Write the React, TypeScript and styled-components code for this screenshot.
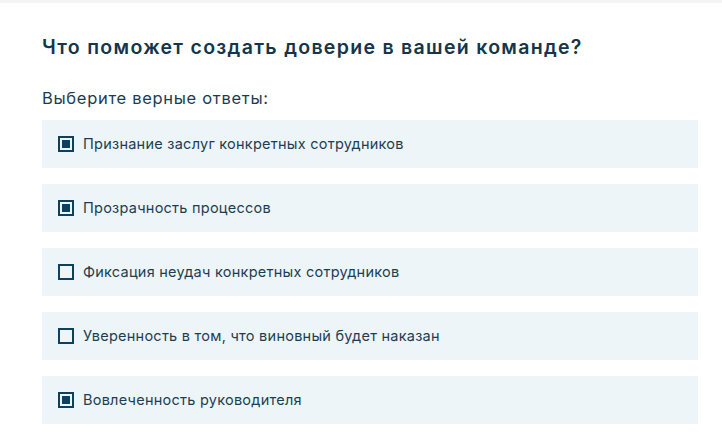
import React, { useState } from "react";
import styled, { createGlobalStyle } from "styled-components";

const GlobalStyle = createGlobalStyle`
  html, body {
    margin: 0;
    padding: 0;
    background: #ffffff;
  }
  body {
    font-family: Inter, "Open Sans", sans-serif;
    color: #1b3b4f;
  }
`;

const TopBar = styled.div`
  height: 3px;
  background: #f4f4f5;
`;

const Quiz = styled.section`
  padding: 29px 24px 0 42px;
  width: 656px;
`;

const Title = styled.h2`
  margin: 0;
  font-size: 19.5px;
  line-height: 30px;
  font-weight: 600;
  letter-spacing: 1.3px;
  color: #14354a;
`;

const Hint = styled.p`
  margin: 25px 0 0;
  font-size: 16.5px;
  line-height: 22px;
  font-weight: 400;
  letter-spacing: 0.7px;
  color: #1b3b4f;
`;

const Options = styled.div`
  display: flex;
  flex-direction: column;
  gap: 16px;
  margin-top: 11px;
`;

const Option = styled.label`
  display: flex;
  align-items: center;
  gap: 9px;
  height: 48px;
  padding: 0 16px;
  background: #edf5f9;
  cursor: pointer;
`;

const Box = styled.span<{ $checked: boolean }>`
  flex: none;
  width: 16px;
  height: 16px;
  box-sizing: border-box;
  border: 2px solid #0d4160;
  padding: 2px;
  display: flex;

  &::after {
    content: "";
    flex: 1;
    background: ${(p) => (p.$checked ? "#0d4160" : "transparent")};
  }
`;

const OptionText = styled.span`
  font-size: 14.5px;
  line-height: 20px;
  letter-spacing: 0.25px;
  color: #1d3e52;
`;

const answers = [
  { text: "Признание заслуг конкретных сотрудников", checked: true },
  { text: "Прозрачность процессов", checked: true },
  { text: "Фиксация неудач конкретных сотрудников", checked: false },
  { text: "Уверенность в том, что виновный будет наказан", checked: false },
  { text: "Вовлеченность руководителя", checked: true },
];

export default function App() {
  const [picked, setPicked] = useState(answers.map((a) => a.checked));

  const toggle = (i: number) => {
    setPicked((prev) => prev.map((v, j) => (j === i ? !v : v)));
  };

  return (
    <>
      <GlobalStyle />
      <TopBar />
      <Quiz>
        <Title>Что поможет создать доверие в вашей команде?</Title>
        <Hint>Выберите верные ответы:</Hint>
        <Options>
          {answers.map((a, i) => (
            <Option key={a.text} onClick={() => toggle(i)}>
              <Box $checked={picked[i]} />
              <OptionText>{a.text}</OptionText>
            </Option>
          ))}
        </Options>
      </Quiz>
    </>
  );
}
